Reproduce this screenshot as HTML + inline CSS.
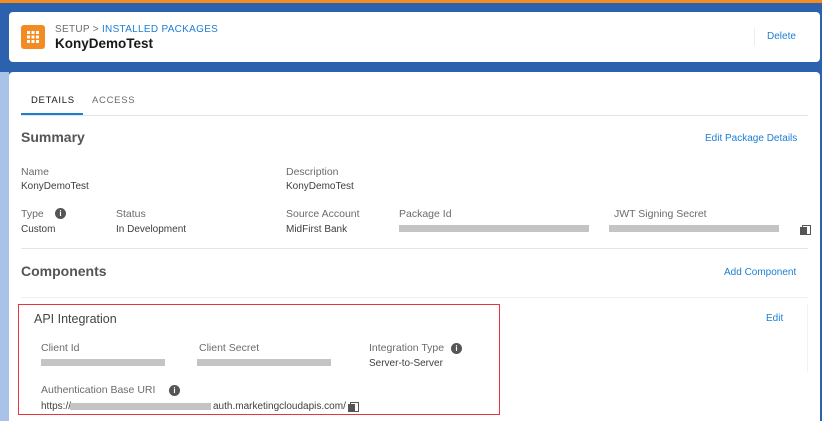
<!DOCTYPE html>
<html><head><meta charset="utf-8"><style>
*{margin:0;padding:0;box-sizing:border-box}
body{width:822px;height:421px;overflow:hidden;background:#2c62ad;font-family:"Liberation Sans",sans-serif;position:relative;color:#3e3e3c}
.a{position:absolute;white-space:nowrap}
.lbl{font-size:10.5px;color:#6b6b6b}
.val{font-size:10px;color:#3e3e3c}
.link{color:#1b7fd4;font-size:10px}
.bar{position:absolute;height:7px;background:#c4c4c4}
.info{position:absolute;width:11px;height:11px;border-radius:50%;background:#555;color:#fff;font-size:8px;font-weight:bold;text-align:center;line-height:11px}
.copy{position:absolute;width:9px;height:10px}
.copy:before{content:"";position:absolute;left:2px;top:0;width:7px;height:8px;border:1.5px solid #555}
.copy:after{content:"";position:absolute;left:0;top:2px;width:7px;height:8px;background:#555}
.line{position:absolute;height:1px;background:#e4e4e4}
</style></head><body>
<div class="a" style="left:0;top:0;width:822px;height:3px;background:#f38b1f"></div>
<div class="a" style="left:0;top:72px;width:9px;height:349px;background:#a8c2e9"></div>
<div class="a" style="left:9px;top:12px;width:811px;height:50px;background:#fff;border-radius:4px"></div>
<div class="a" style="left:21px;top:25px;width:24px;height:24px;background:#f38b23;border-radius:3px"></div>
<svg class="a" style="left:21px;top:25px" width="24" height="24"><g fill="#fff"><rect x="6" y="6" width="3" height="3"/><rect x="10.5" y="6" width="3" height="3"/><rect x="15" y="6" width="3" height="3"/><rect x="6" y="10.5" width="3" height="3"/><rect x="10.5" y="10.5" width="3" height="3"/><rect x="15" y="10.5" width="3" height="3"/><rect x="6" y="15" width="3" height="3"/><rect x="10.5" y="15" width="3" height="3"/><rect x="15" y="15" width="3" height="3"/></g></svg>
<div class="a" style="left:55px;top:24px;font-size:10px;letter-spacing:.3px;color:#6b6b6b">SETUP &gt; <span style="color:#1b7fd4">INSTALLED PACKAGES</span></div>
<div class="a" style="left:55px;top:36px;font-size:13.5px;font-weight:bold;color:#181818">KonyDemoTest</div>
<div class="a" style="left:754px;top:28px;width:1px;height:18px;background:#eee"></div>
<div class="a link" style="left:767px;top:31px">Delete</div>

<div class="a" style="left:9px;top:72px;width:811px;height:349px;background:#fff;border-radius:4px 4px 0 0"></div>
<div class="a" style="left:31px;top:95px;font-size:9.5px;letter-spacing:.7px;color:#181818">DETAILS</div>
<div class="a" style="left:92px;top:95px;font-size:9.5px;letter-spacing:.7px;color:#6b6b6b">ACCESS</div>
<div class="line" style="left:21px;top:115px;width:787px"></div>
<div class="a" style="left:21px;top:113px;width:62px;height:2px;background:#1b7fd4"></div>

<div class="a" style="left:21px;top:129px;font-size:14px;font-weight:bold;color:#555">Summary</div>
<div class="a link" style="left:705px;top:133px">Edit Package Details</div>
<div class="a lbl" style="left:21px;top:166px">Name</div>
<div class="a val" style="left:21px;top:181px">KonyDemoTest</div>
<div class="a lbl" style="left:286px;top:166px">Description</div>
<div class="a val" style="left:286px;top:181px">KonyDemoTest</div>
<div class="a lbl" style="left:21px;top:208px">Type</div><div class="info" style="left:55px;top:208px">i</div>
<div class="a val" style="left:21px;top:224px">Custom</div>
<div class="a lbl" style="left:116px;top:208px">Status</div>
<div class="a val" style="left:116px;top:224px">In Development</div>
<div class="a lbl" style="left:286px;top:208px">Source Account</div>
<div class="a val" style="left:286px;top:224px">MidFirst Bank</div>
<div class="a lbl" style="left:399px;top:208px">Package Id</div>
<div class="bar" style="left:399px;top:225px;width:190px"></div>
<div class="a lbl" style="left:614px;top:208px">JWT Signing Secret</div>
<div class="bar" style="left:609px;top:225px;width:170px"></div>
<div class="copy" style="left:800px;top:225px"></div>
<div class="line" style="left:21px;top:248px;width:787px"></div>

<div class="a" style="left:21px;top:263px;font-size:14px;font-weight:bold;color:#555">Components</div>
<div class="a link" style="left:724px;top:267px">Add Component</div>
<div class="line" style="left:21px;top:297px;width:787px;background:#f0f0f0"></div>
<div class="a" style="left:18px;top:304px;width:790px;height:68px;border-right:1px solid #f2f2f2"></div>
<div class="a" style="left:18px;top:304px;width:482px;height:111px;border:1px solid #e8343a"></div>
<div class="a" style="left:34px;top:312px;font-size:12.5px;color:#444">API Integration</div>
<div class="a link" style="left:766px;top:313px">Edit</div>
<div class="a lbl" style="left:41px;top:342px">Client Id</div>
<div class="bar" style="left:41px;top:359px;width:124px"></div>
<div class="a lbl" style="left:199px;top:342px">Client Secret</div>
<div class="bar" style="left:197px;top:359px;width:134px"></div>
<div class="a lbl" style="left:369px;top:342px">Integration Type</div><div class="info" style="left:451px;top:343px">i</div>
<div class="a val" style="left:369px;top:358px">Server-to-Server</div>
<div class="a lbl" style="left:41px;top:384px">Authentication Base URI</div><div class="info" style="left:169px;top:385px">i</div>
<div class="a val" style="left:41px;top:401px">https://</div>
<div class="bar" style="left:70px;top:403px;width:141px"></div>
<div class="a val" style="left:213px;top:401px">auth.marketingcloudapis.com/</div>
<div class="copy" style="left:348px;top:402px"></div>
</body></html>
